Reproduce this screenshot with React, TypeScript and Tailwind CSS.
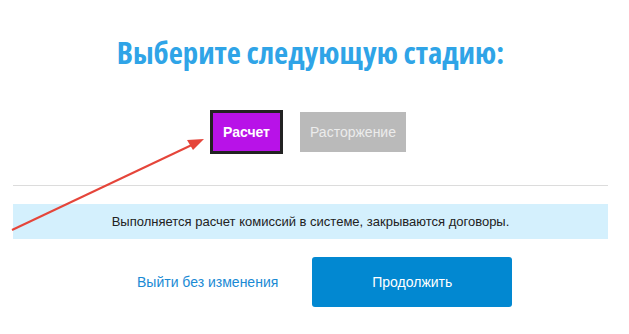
export default function App() {
  return (
    <div className="relative w-[629px] h-[334px] bg-white overflow-hidden" style={{ fontFamily: '"Liberation Sans", Arial, sans-serif' }}>
      <div className="pl-[13px] w-[608px]">
        <h1
          className="pt-[32px] h-[80px] text-center text-[30.8px] font-bold text-[#2fa4e7] leading-[40px]"
          style={{ fontFamily: '"Open Sans", sans-serif', fontStretch: "75%" }}
        >
          Выберите следующую стадию:
        </h1>
        <div className="flex justify-center gap-[17px] pt-[30px] pr-[5px]">
          <button className="w-[73px] h-[44px] border-[3px] border-[#222222] bg-[#b812e8] text-white font-bold text-[14px]">
            Расчет
          </button>
          <button className="mt-[2px] w-[106px] h-[40px] bg-[#bababa] text-[#ececec] text-[14px]">
            Расторжение
          </button>
        </div>
        <div className="mt-[31px] border-t border-[#dcdcdc]" />
        <div className="mt-[18px] h-[35px] bg-[#d4f0fd] flex items-center justify-center text-[13px] text-[#222222]">
          Выполняется расчет комиссий в системе, закрываются договоры.
        </div>
        <div className="mt-[18px] flex items-center pl-[124px]">
          <a className="text-[14px] text-[#1a8ad4]">Выйти без изменения</a>
          <button className="ml-[34px] w-[200px] h-[50px] rounded-[3px] bg-[#0288d1] text-white text-[14px]">
            Продолжить
          </button>
        </div>
      </div>
      <svg className="absolute left-0 top-0" width="629" height="334">
        <line x1="12" y1="230" x2="196" y2="143" stroke="#e5453a" strokeWidth="2" />
        <polygon points="204,139 187,140 193,150" fill="#e5453a" />
      </svg>
    </div>
  );
}
